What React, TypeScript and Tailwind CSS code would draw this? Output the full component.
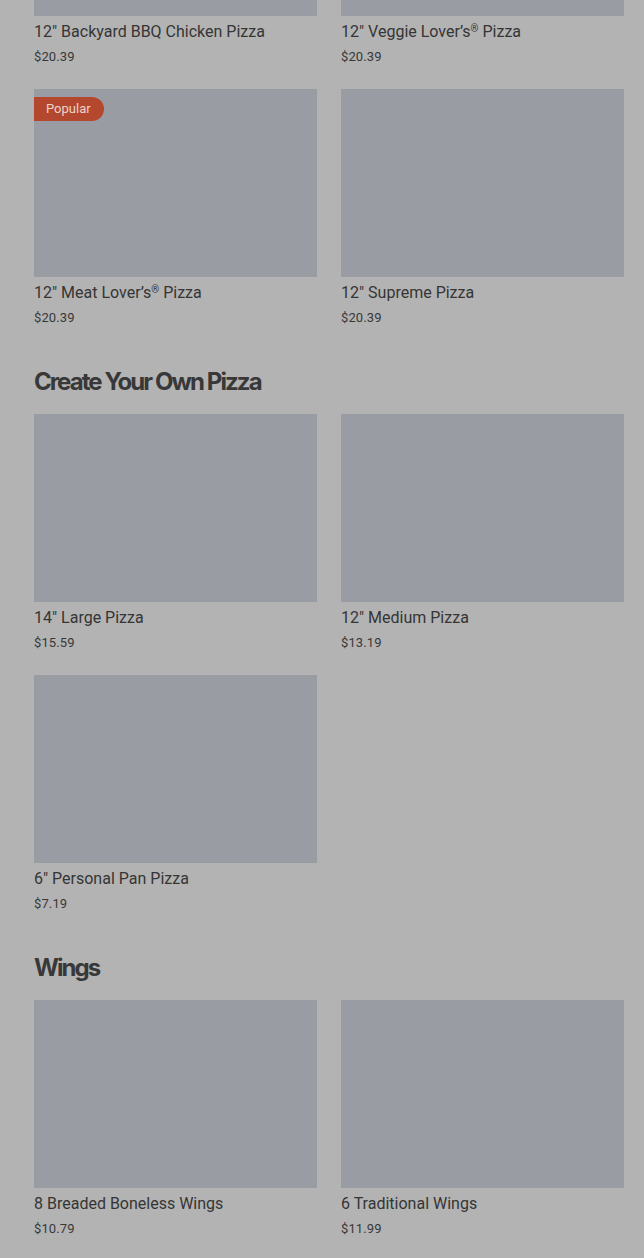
import React from 'react';

type Item = { name: string; price: string; popular?: boolean };
type Section = { title?: string; items: Item[] };

const sections: Section[] = [
  {
    items: [
      { name: '12" Backyard BBQ Chicken Pizza', price: '$20.39' },
      { name: '12" Veggie Lover\u2019s\u00ae Pizza', price: '$20.39' },
      { name: '12" Meat Lover\u2019s\u00ae Pizza', price: '$20.39', popular: true },
      { name: '12" Supreme Pizza', price: '$20.39' },
    ],
  },
  {
    title: 'Create Your Own Pizza',
    items: [
      { name: '14" Large Pizza', price: '$15.59' },
      { name: '12" Medium Pizza', price: '$13.19' },
      { name: '6" Personal Pan Pizza', price: '$7.19' },
    ],
  },
  {
    title: 'Wings',
    items: [
      { name: '8 Breaded Boneless Wings', price: '$10.79' },
      { name: '6 Traditional Wings', price: '$11.99' },
    ],
  },
];

// render the registered mark small and raised, like the menu does
const ItemName: React.FC<{ name: string }> = ({ name }) => {
  const parts = name.split('\u00ae');
  return (
    <>
      {parts.map((part, i) => (
        <React.Fragment key={i}>
          {part}
          {i < parts.length - 1 && (
            <span className="relative -top-[5px] text-[10px] leading-[0]">{'\u00ae'}</span>
          )}
        </React.Fragment>
      ))}
    </>
  );
};

const MenuCard: React.FC<{ item: Item }> = ({ item }) => (
  <div className="flex flex-col">
    <div className="relative h-[188px] bg-[#999ca2]">
      {item.popular && (
        <span className="absolute left-0 top-[8px] h-[24px] pl-[12px] pr-[13px] flex items-center rounded-r-full bg-[#b4482f] text-[13px] text-[#ecd3cc]">
          Popular
        </span>
      )}
    </div>
    <p className="mt-[4px] h-[24px] text-[16px] leading-[24px] text-[#353535]">
      <ItemName name={item.name} />
    </p>
    <p className="mt-[1px] text-[13px] leading-[24px] tracking-[0.01em] text-[#383838]">{item.price}</p>
  </div>
);

const App: React.FC = () => {
  return (
    <div className="h-[1258px] overflow-hidden bg-[#b3b3b3] font-['Roboto',sans-serif]">
      <div className="-mt-[172px] pl-[34px] pr-[20px]">
        {sections.map((section, i) => (
          <section key={i} className="flex flex-col">
            {section.title && (
              <h2 className="mt-[36px] mb-[16px] text-[24px] leading-[32px] font-bold tracking-[-0.08em] text-[#383838] font-['Inter',sans-serif]">
                {section.title}
              </h2>
            )}
            <div className="grid grid-cols-2 gap-x-[24px] gap-y-[20px]">
              {section.items.map((item) => (
                <MenuCard key={item.name} item={item} />
              ))}
            </div>
          </section>
        ))}
      </div>
    </div>
  );
};

export default App;
